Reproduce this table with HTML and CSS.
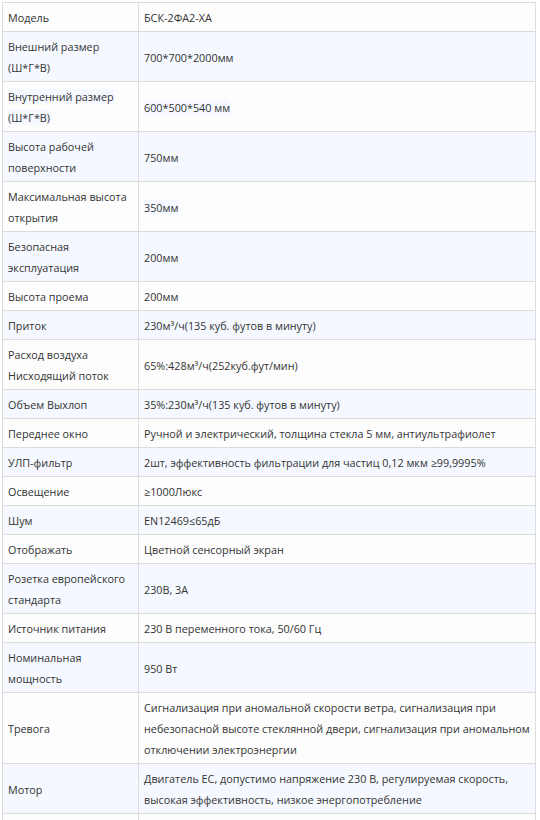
FILE: index.html
```html
<!DOCTYPE html>
<html lang="ru">
<head>
<meta charset="utf-8">
<title>Характеристики</title>
<link rel="stylesheet" href="styles.css">
</head>
<body>
<table class="spec">
<tbody>
<tr><td class="k">Модель</td><td class="v">БСК-2ФА2-ХА</td></tr>
<tr><td class="k">Внешний размер (Ш*Г*В)</td><td class="v">700*700*2000мм</td></tr>
<tr><td class="k"><span class="hl">Внутренний размер (Ш*Г*В)</span></td><td class="v"><span class="hl">600*500*540 мм</span></td></tr>
<tr><td class="k">Высота рабочей поверхности</td><td class="v">750мм</td></tr>
<tr><td class="k">Максимальная высота открытия</td><td class="v"><span class="hl">350мм</span></td></tr>
<tr><td class="k">Безопасная эксплуатация</td><td class="v">200мм</td></tr>
<tr><td class="k">Высота проема</td><td class="v">200мм</td></tr>
<tr><td class="k">Приток</td><td class="v">230м³/ч(135 куб. футов в минуту)</td></tr>
<tr><td class="k">Расход воздуха Нисходящий поток</td><td class="v">65%:428м³/ч(252куб.фут/мин)</td></tr>
<tr><td class="k">Объем Выхлоп</td><td class="v">35%:230м³/ч(135 куб. футов в минуту)</td></tr>
<tr><td class="k">Переднее окно</td><td class="v">Ручной и электрический, толщина стекла 5 мм, антиультрафиолет</td></tr>
<tr><td class="k">УЛП-фильтр</td><td class="v">2шт, эффективность фильтрации для частиц 0,12 мкм ≥99,9995%</td></tr>
<tr><td class="k">Освещение</td><td class="v">≥1000Люкс</td></tr>
<tr><td class="k"><span class="hl">Шум</span></td><td class="v">EN12469≤65дБ</td></tr>
<tr><td class="k">Отображать</td><td class="v">Цветной сенсорный экран</td></tr>
<tr><td class="k"><span class="hl">Розетка европейского стандарта</span></td><td class="v">230В, 3А</td></tr>
<tr><td class="k">Источник питания</td><td class="v">230 В переменного тока, 50/60 Гц</td></tr>
<tr><td class="k">Номинальная мощность</td><td class="v">950 Вт</td></tr>
<tr><td class="k">Тревога</td><td class="v">Сигнализация при аномальной скорости ветра, сигнализация при небезопасной высоте стеклянной двери, сигнализация при аномальном отключении электроэнергии</td></tr>
<tr><td class="k">Мотор</td><td class="v">Двигатель ЕС, допустимо напряжение 230 В, регулируемая скорость, высокая эффективность, низкое энергопотребление</td></tr>
<tr><td class="k">&nbsp;</td><td class="v">&nbsp;</td></tr>
</tbody>
</table>
</body>
</html>
```
FILE: styles.css
```css
html, body {
  margin: 0;
  padding: 0;
  background: #ffffff;
}
body {
  padding: 2px 0 0 2px;
  font-family: "Open Sans", "Noto Sans", "DejaVu Sans", sans-serif;
  font-size: 10.8px;
  color: #333333;
}
.spec {
  border-collapse: collapse;
  width: 534px;
  table-layout: fixed;
}
.spec td {
  border: 1px solid #dcdcdc;
  padding: 4px 5px 3px 5px;
  line-height: 21px;
  vertical-align: middle;
  text-align: left;
}
.spec .k {
  width: 125px;
}
.spec tr:nth-child(odd) td {
  background: #fdfdfd;
}
.spec tr:nth-child(even) td {
  background: #f5f9ff;
}
.hl {
  background: #f5f9ff;
}
```
